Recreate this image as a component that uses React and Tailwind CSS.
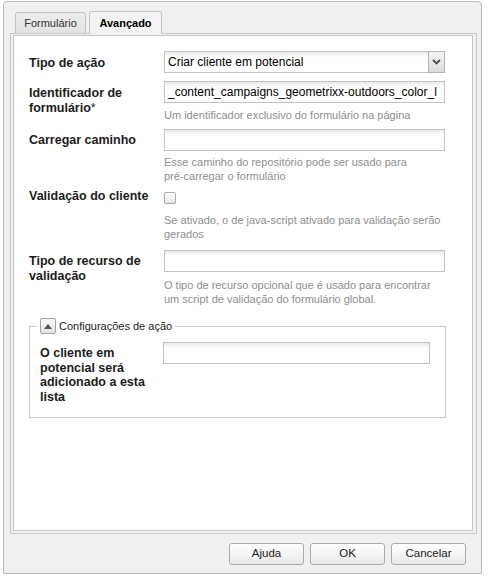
import React from "react";

function Label({ children, className = "pt-[5px]" }) {
  return (
    <div className={"w-[135px] shrink-0 text-[12.5px] leading-[15px] font-bold text-[#1c1c1c] whitespace-nowrap " + className}>
      {children}
    </div>
  );
}

function TextInput({ value = "", className = "w-[281px]" }) {
  return (
    <div className={"h-[22px] border border-[#c3c3c3] bg-[linear-gradient(#e9e9e9,#ffffff_5px)] px-[3px] text-[12px] leading-[20px] text-black whitespace-nowrap overflow-hidden " + className}>
      {value}
    </div>
  );
}

function Help({ children, className = "" }) {
  return (
    <div className={"text-[11px] leading-[14px] text-[#8e8e8e] " + className}>{children}</div>
  );
}

export default function App() {
  return (
    <div className="w-[489px] h-[577px] bg-white pt-[1px] pl-[3px] font-['Liberation_Sans',Arial,sans-serif]">
      <div className="w-[479px] h-[573px] border border-[#bdbdbd] rounded-t-[4px] bg-[#f0f0f0] flex flex-col">
        {/* tab strip */}
        <div className="ml-[6px] w-[467px] h-[32px] shrink-0 border-b border-[#c6c6c6] flex items-end pl-[5px] gap-[3px]">
          <div className="w-[71px] h-[21px] border border-b-0 border-[#c4c4c4] rounded-t-[3px] bg-[linear-gradient(#ececec,#e2e2e2)] flex items-center justify-center text-[11px] text-[#333] pt-[1px]">
            Formulário
          </div>
          <div className="w-[73px] h-[23px] -mb-px border border-b-0 border-[#c4c4c4] rounded-t-[3px] bg-[#f3f3f3] flex items-center justify-center text-[11px] font-bold text-black">
            Avançado
          </div>
        </div>
        {/* body */}
        <div className="ml-[6px] w-[467px] h-[500px] shrink-0 border-x border-b border-[#c6c6c6] pt-[1px] pl-[2px] pr-[3px] pb-[2px] bg-[#f0f0f0]">
          <div className="h-full border border-[#c6c6c6] bg-white pl-[15px] pt-[15px]">
            {/* Row 1 */}
            <div className="flex">
              <Label>Tipo de ação</Label>
              <div className="w-[281px] h-[22px] flex">
                <div className="flex-1 border border-r-0 border-[#c3c3c3] bg-[linear-gradient(#e9e9e9,#ffffff_5px)] px-[3px] text-[12px] leading-[20px] text-black">
                  Criar cliente em potencial
                </div>
                <div className="w-[17px] border border-[#b5b5b5] bg-[linear-gradient(#f4f4f4,#dcdcdc)] flex items-center justify-center">
                  <svg width="9" height="6" viewBox="0 0 9 6">
                    <path d="M1 1 L4.5 4.5 L8 1" fill="none" stroke="#4a4a4a" strokeWidth="1.8" />
                  </svg>
                </div>
              </div>
            </div>
            {/* Row 2 */}
            <div className="flex mt-[8px]">
              <Label className="pt-[5px]">
                Identificador de
                <br />
                formulário<span className="font-normal">*</span>
              </Label>
              <div>
                <TextInput value="_content_campaigns_geometrixx-outdoors_color_l" />
                <Help className="mt-[5px]">Um identificador exclusivo do formulário na página</Help>
              </div>
            </div>
            {/* Row 3 */}
            <div className="flex mt-[7px]">
              <Label className="pt-[4px]">Carregar caminho</Label>
              <div>
                <TextInput />
                <Help className="mt-[4px]">
                  Esse caminho do repositório pode ser usado para
                  <br />
                  pré-carregar o formulário
                </Help>
              </div>
            </div>
            {/* Row 4 */}
            <div className="flex mt-[4px]">
              <Label className="pt-[2px]">Validação do cliente</Label>
              <div>
                <div className="mt-[5px] w-[12px] h-[12px] border border-[#a9a9a9] rounded-[2px] bg-[linear-gradient(#ffffff,#e6e6e6)]" />
                <Help className="mt-[9px]">
                  Se ativado, o de java-script ativado para validação serão
                  <br />
                  gerados
                </Help>
              </div>
            </div>
            {/* Row 5 */}
            <div className="flex mt-[9px]">
              <Label className="pt-[4px]">
                Tipo de recurso de
                <br />
                validação
              </Label>
              <div>
                <TextInput />
                <Help className="mt-[6px]">
                  O tipo de recurso opcional que é usado para encontrar
                  <br />
                  um script de validação do formulário global.
                </Help>
              </div>
            </div>
            {/* Fieldset */}
            <fieldset className="mt-[12px] w-[417px] border border-[#c8c8c8] pl-[10px] pb-[12px]">
              <legend className="-ml-[3px] px-[3px] flex items-center gap-[3px]">
                <span className="w-[16px] h-[16px] border border-[#a3a3a3] rounded-[2px] bg-[linear-gradient(#fafafa,#e0e0e0)] flex items-center justify-center">
                  <svg width="8" height="5" viewBox="0 0 8 5">
                    <path d="M0 5 L4 0 L8 5 Z" fill="#555" />
                  </svg>
                </span>
                <span className="text-[11px] leading-[15px] text-[#1c1c1c]">Configurações de ação</span>
              </legend>
              <div className="flex mt-[8px]">
                <div className="w-[123px] shrink-0 pt-[4px] text-[12.5px] leading-[14.7px] font-bold text-[#1c1c1c] whitespace-nowrap">
                  O cliente em
                  <br />
                  potencial será
                  <br />
                  adicionado a esta
                  <br />
                  lista
                </div>
                <TextInput className="w-[267px]" />
              </div>
            </fieldset>
          </div>
        </div>
        {/* footer */}
        <div className="flex justify-end gap-[6px] pr-[15px] pt-[9px]">
          {["Ajuda", "OK", "Cancelar"].map((t) => (
            <div
              key={t}
              className="w-[75px] h-[22px] border border-[#ababab] rounded-[3px] bg-[linear-gradient(#ffffff,#e9e9e9)] flex items-center justify-center text-[11.5px] text-[#222]"
            >
              {t}
            </div>
          ))}
        </div>
      </div>
    </div>
  );
}
